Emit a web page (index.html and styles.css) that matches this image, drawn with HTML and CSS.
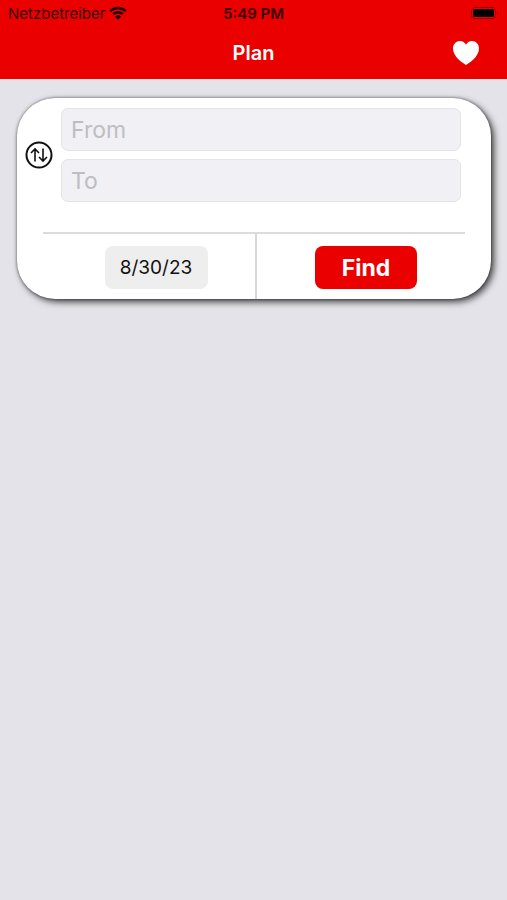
FILE: index.html
```
<!DOCTYPE html>
<html lang="en">
<head>
<meta charset="utf-8">
<meta name="viewport" content="width=device-width, initial-scale=1">
<title>Plan</title>
<link rel="stylesheet" href="styles.css">
</head>
<body>
<header class="header">
  <div class="status">
    <div class="carrier">
      <span>Netzbetreiber</span>
      <svg class="wifi" viewBox="0 0 18 14" aria-hidden="true">
        <path d="M1.2 5.1a11.2 11.2 0 0 1 15.6 0" />
        <path d="M4.1 8.2a7 7 0 0 1 9.8 0" />
        <path class="wifi-dot" d="M6 10.7a4.3 4.3 0 0 1 6 0L9 13.8z" />
      </svg>
    </div>
    <span class="clock">5:49 PM</span>
    <svg class="battery" viewBox="0 0 28 12" aria-hidden="true">
      <rect class="battery-case" x="0.5" y="0.5" width="24" height="11" rx="3" />
      <rect x="2" y="2" width="21" height="8" rx="1.5" />
      <path class="battery-tip" d="M26 4q2 2 0 4z" />
    </svg>
  </div>
  <div class="nav">
    <h1 class="title">Plan</h1>
    <button class="favorite" type="button" aria-label="Favorites">
      <svg viewBox="0 0 26 24" aria-hidden="true">
        <path d="M13 24C10 22.300 0 16 0 7.600C0 3.200 3 0 7 0C9.700 0 11.900 1.400 13 3.700C14.100 1.400 16.300 0 19 0C23 0 26 3.200 26 7.600C26 16 16 22.300 13 24Z" />
      </svg>
    </button>
  </div>
</header>
<main>
  <form class="card">
    <div class="route">
      <button class="swap" type="button" aria-label="Swap stations">
        <svg viewBox="0 0 28 28" aria-hidden="true">
          <circle cx="14" cy="14" r="12.500" />
          <path class="arrows" d="M10 20.500V8M6 12l4-4 4 4M18 7.500V20M14 16l4 4 4-4" />
        </svg>
      </button>
      <div class="fields">
        <input class="field" type="text" placeholder="From" aria-label="From">
        <input class="field" type="text" placeholder="To" aria-label="To">
      </div>
    </div>
    <div class="actions">
      <div class="cell cell-date"><button class="date" type="button">8/30/23</button></div>
      <div class="cell cell-find"><button class="find" type="submit">Find</button></div>
    </div>
  </form>
</main>
</body>
</html>
```
FILE: styles.css
```
* {
  box-sizing: border-box;
}

body {
  margin: 0;
  min-height: 100vh;
  background: #e4e3e9;
  font-family: Inter, "Liberation Sans", sans-serif;
}

button {
  border: 0;
  padding: 0;
  font-family: inherit;
}

.header {
  background: #eb0000;
}

.status,
.nav {
  display: grid;
  grid-template-columns: 1fr auto 1fr;
  align-items: center;
}

.status {
  height: 26px;
  padding: 0 8px;
  color: #3a0000;
  font-size: 15px;
}

.carrier {
  display: flex;
  align-items: center;
  gap: 4px;
}

.wifi {
  width: 18px;
  height: 14px;
  fill: none;
  stroke: #1c0000;
  stroke-width: 2.4;
}

.wifi-dot {
  fill: #1c0000;
  stroke: none;
}

.clock {
  font-weight: 600;
}

.battery {
  width: 28px;
  height: 12px;
  justify-self: end;
}

.battery-case {
  fill: none;
  stroke: #a80000;
}

.battery-tip {
  fill: #a80000;
}

.nav {
  height: 53px;
  padding: 0 28px;
}

.title {
  grid-column: 2;
  margin: 0;
  color: #fff;
  font-size: 20px;
  font-weight: 600;
  line-height: 24px;
}

.favorite {
  justify-self: end;
  width: 26px;
  height: 24px;
  background: none;
}

.favorite svg {
  display: block;
  fill: #fff;
}

.card {
  margin: 19px 16px 0 17px;
  border-radius: 38px;
  background: #fff;
  box-shadow: 3px 3px 7px rgba(0, 0, 0, 0.7), 0 0 3px rgba(0, 0, 0, 0.5);
}

.route {
  display: flex;
  align-items: center;
  gap: 8px;
  padding: 10px 30px 30px 8px;
}

.swap {
  width: 28px;
  height: 28px;
  background: none;
}

.swap svg {
  display: block;
  fill: none;
  stroke: #111;
  stroke-width: 2;
}

.swap .arrows {
  stroke-width: 1.6;
}

.fields {
  flex: 1;
  display: grid;
  gap: 8px;
}

.field {
  width: 100%;
  height: 43px;
  padding: 0 9px;
  border: 1px solid #e4e4e8;
  border-radius: 7px;
  background: #f0f0f5;
  color: #111;
  font-family: inherit;
  font-size: 23px;
}

.field::placeholder {
  color: #bebec2;
}

.actions {
  display: grid;
  grid-template-columns: 1fr 1fr;
  gap: 2px;
  margin: 0 26px;
  border-top: 2px solid #dcdcde;
}

.cell {
  display: flex;
  justify-content: center;
  padding: 12px 0 10px;
}

.cell-date {
  padding-left: 16px;
}

.cell-find {
  padding-left: 10px;
  border-left: 2px solid #d8d8dc;
}

.date,
.find {
  height: 43px;
  border-radius: 8px;
}

.date {
  width: 103px;
  background: #eee;
  color: #111;
  font-size: 19px;
}

.find {
  width: 102px;
  background: #eb0000;
  color: #fff;
  font-size: 23px;
  font-weight: 700;
}
```
